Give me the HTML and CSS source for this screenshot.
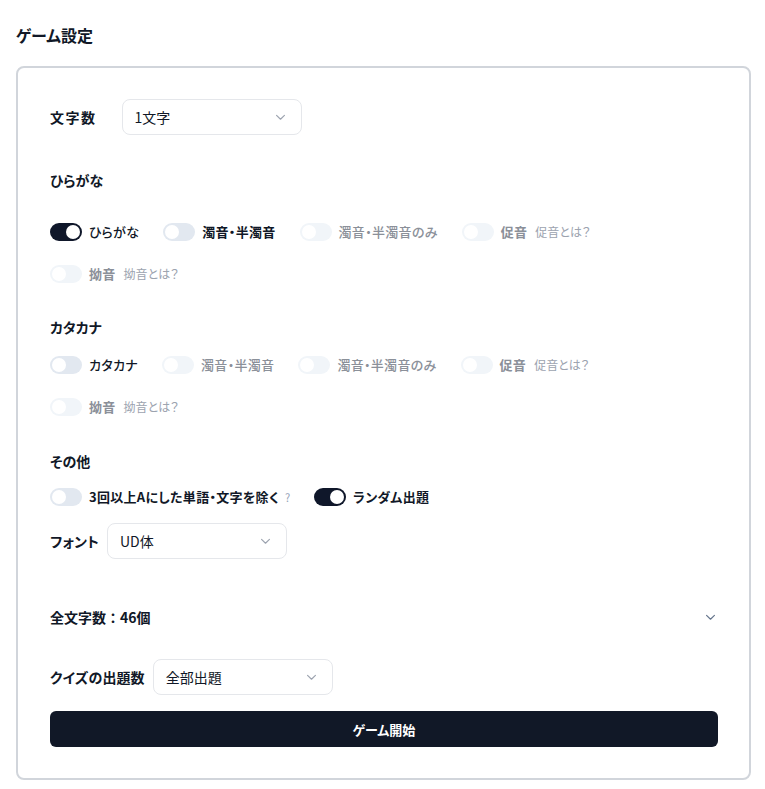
FILE: index.html
```html
<!DOCTYPE html>
<html lang="ja">
<head>
<meta charset="utf-8">
<link rel="stylesheet" href="styles.css">
</head>
<body>
<h1 class="title">ゲーム設定</h1>
<div class="card">
  <div class="field">
    <span class="label label-wide">文字数</span>
    <div class="select"><span>1文字</span><svg class="chev" viewBox="0 0 12 8"><path d="M1.5 1.5 6 6l4.5-4.5"/></svg></div>
  </div>

  <div class="heading h-hira">ひらがな</div>
  <div class="toggles t-hira">
    <div class="item"><span class="sw on"><i></i></span><span class="tl">ひらがな</span></div>
    <div class="item"><span class="sw"><i></i></span><span class="tl bold">濁音・半濁音</span></div>
    <div class="item dis"><span class="sw"><i></i></span><span class="tl">濁音・半濁音のみ</span></div>
    <div class="item dis"><span class="sw"><i></i></span><span class="tl bold">促音</span><span class="hint">促音とは？</span></div>
    <div class="item dis"><span class="sw"><i></i></span><span class="tl bold">拗音</span><span class="hint">拗音とは？</span></div>
  </div>

  <div class="heading h-kata">カタカナ</div>
  <div class="toggles t-kata">
    <div class="item"><span class="sw"><i></i></span><span class="tl">カタカナ</span></div>
    <div class="item dis"><span class="sw"><i></i></span><span class="tl">濁音・半濁音</span></div>
    <div class="item dis"><span class="sw"><i></i></span><span class="tl">濁音・半濁音のみ</span></div>
    <div class="item dis"><span class="sw"><i></i></span><span class="tl bold">促音</span><span class="hint">促音とは？</span></div>
    <div class="item dis"><span class="sw"><i></i></span><span class="tl bold">拗音</span><span class="hint">拗音とは？</span></div>
  </div>

  <div class="heading h-other">その他</div>
  <div class="toggles t-other">
    <div class="item"><span class="sw"><i></i></span><span class="tl bold">3回以上Aにした単語・文字を除く</span><span class="q">?</span></div>
    <div class="item"><span class="sw on"><i></i></span><span class="tl bold">ランダム出題</span></div>
  </div>
  <div class="field f-font">
    <span class="label">フォント</span>
    <div class="select"><span>UD体</span><svg class="chev" viewBox="0 0 12 8"><path d="M1.5 1.5 6 6l4.5-4.5"/></svg></div>
  </div>

  <div class="total">
    <span class="label wide-colon">全文字数：46個</span>
    <svg class="chev dark" viewBox="0 0 12 8"><path d="M1.5 1.5 6 6l4.5-4.5"/></svg>
  </div>

  <div class="field f-quiz">
    <span class="label">クイズの出題数</span>
    <div class="select"><span>全部出題</span><svg class="chev" viewBox="0 0 12 8"><path d="M1.5 1.5 6 6l4.5-4.5"/></svg></div>
  </div>

  <button class="start">ゲーム開始</button>
</div>
</body>
</html>
```
FILE: styles.css
```css
* { box-sizing: border-box; }
html, body { margin: 0; background: #ffffff; }
body {
  font-family: "Noto Sans CJK JP", "Noto Sans", sans-serif;
  font-feature-settings: "palt";
  color: #111827;
  padding: 23px 14px 0 16px;
  width: 765px;
}
.title {
  margin: 0;
  font-size: 16px;
  line-height: 24px;
  font-weight: 700;
}
.card {
  margin-top: 19px;
  border: 2px solid #d1d5db;
  border-radius: 8px;
  padding: 31px 31px 31px 32px;
  display: flex;
  flex-direction: column;
}
.field {
  display: flex;
  align-items: center;
  gap: 8px;
}
.label {
  font-size: 14px;
  font-weight: 700;
  line-height: 20px;
  letter-spacing: 0.1px;
}
.label-wide { margin-right: 17px; letter-spacing: 1.5px; }
.wide-colon { font-feature-settings: normal; letter-spacing: 0; }
.select {
  width: 180px;
  height: 36px;
  border: 1px solid #e5e7eb;
  border-radius: 8px;
  display: flex;
  align-items: center;
  justify-content: space-between;
  padding: 0 15px 0 12px;
  font-size: 14px;
  color: #111827;
}
.chev {
  width: 11px;
  height: 7px;
  fill: none;
  stroke: #9ca3af;
  stroke-width: 1.3;
  stroke-linecap: round;
  stroke-linejoin: round;
}
.chev.dark { stroke: #64748b; margin-right: 2px; }
.heading {
  font-size: 14px;
  font-weight: 700;
  line-height: 20px;
}
.h-hira { margin-top: 35px; }
.t-hira { margin-top: 32px; }
.h-kata { margin-top: 33px; }
.t-kata { margin-top: 18px; }
.h-other { margin-top: 34px; }
.t-other { margin-top: 16px; }
.toggles {
  display: flex;
  flex-wrap: wrap;
  column-gap: 24px;
  row-gap: 22px;
}
.item {
  display: flex;
  align-items: center;
  height: 20px;
}
.sw {
  width: 32px;
  height: 18px;
  border-radius: 9px;
  background: #e2e8f0;
  padding: 2px;
  display: flex;
  align-items: center;
  flex-shrink: 0;
}
.sw i {
  width: 14px;
  height: 14px;
  border-radius: 50%;
  background: #ffffff;
  display: block;
}
.sw.on { background: #0f172a; justify-content: flex-end; }
.tl {
  margin-left: 7px;
  font-size: 13px;
  font-weight: 500;
  line-height: 20px;
  color: #111827;
  letter-spacing: 0.3px;
}
.tl.bold { font-weight: 700; }
.hint {
  margin-left: 8px;
  font-size: 12px;
  color: #9ca3af;
  line-height: 20px;
}
.q {
  margin-left: 6px;
  font-size: 11px;
  color: #94a3b8;
  line-height: 20px;
}
.item.dis .sw { background: #f1f5f9; }
.item.dis .tl { color: #8b9099; }
.f-font { margin-top: 16px; }
.total {
  margin-top: 48px;
  display: flex;
  align-items: center;
  justify-content: space-between;
  height: 20px;
}
.f-quiz { margin-top: 32px; }
.start {
  margin-top: 16px;
  height: 36px;
  width: 100%;
  border: none;
  border-radius: 6px;
  background: #111827;
  color: #ffffff;
  font-family: inherit;
  font-feature-settings: "palt";
  font-size: 13px;
  font-weight: 700;
}
```
